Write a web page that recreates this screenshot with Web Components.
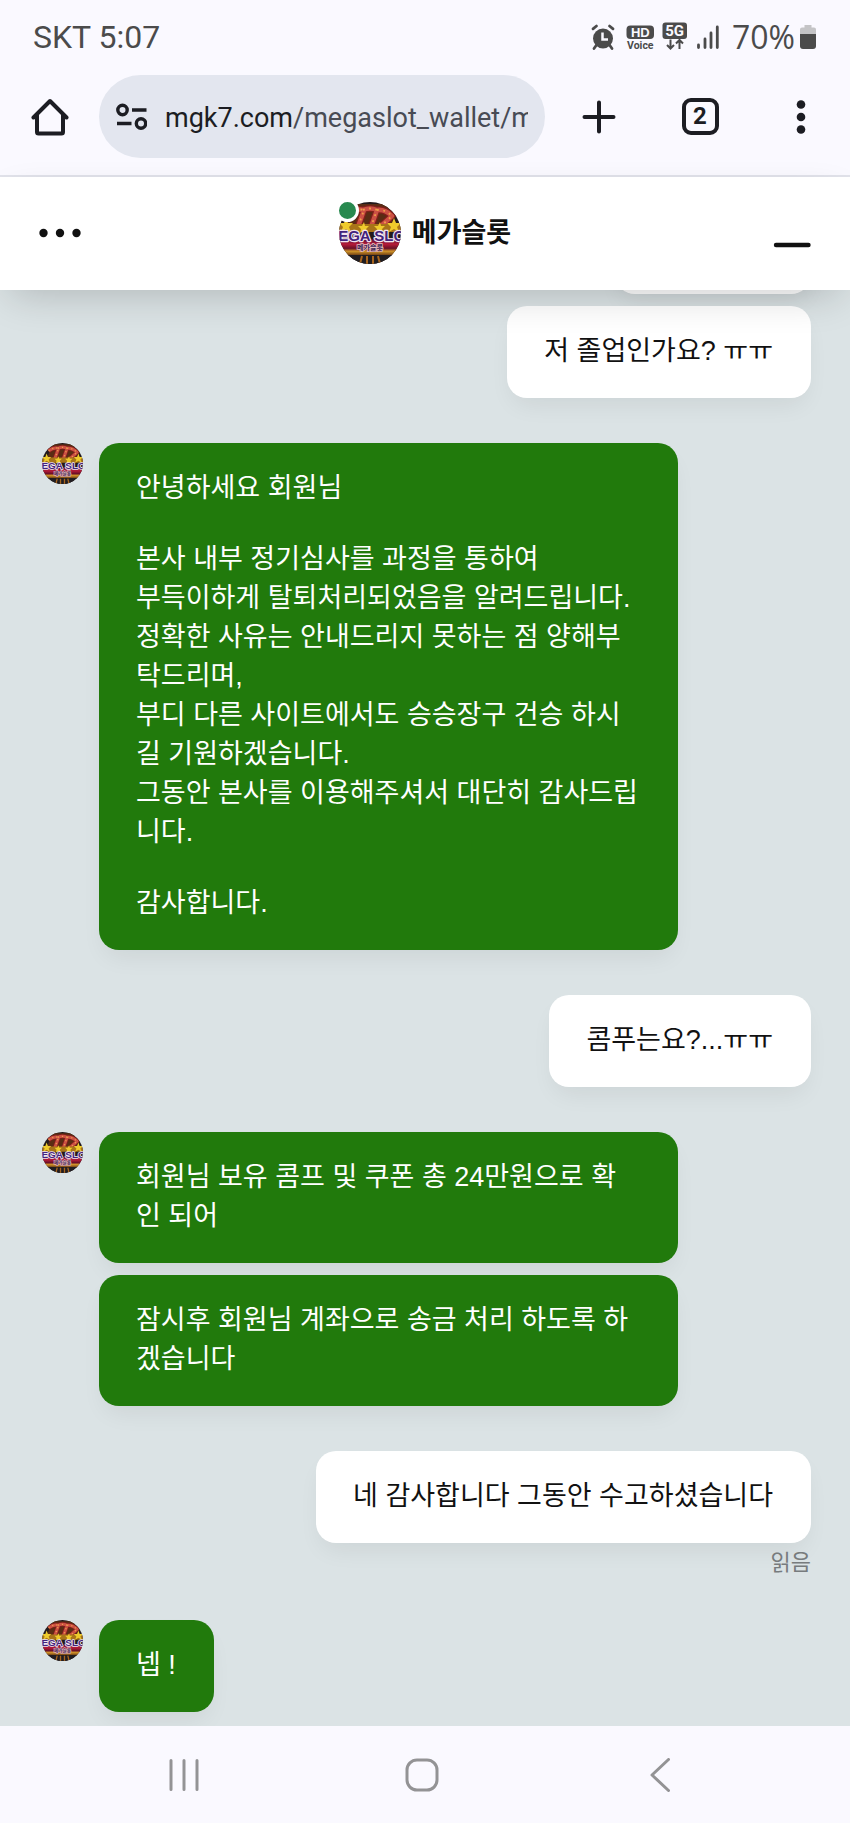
<!DOCTYPE html>
<html lang="ko">
<head>
<meta charset="utf-8">
<meta name="viewport" content="width=device-width, initial-scale=1">
<title>메가슬롯</title>
<style>
  html, body { margin: 0; }
  body { background: #faf9ff; font-family: Roboto, "Noto Sans CJK KR", sans-serif; color: #111; }
</style>
</head>
<body>
<phone-screen>
  <status-bar slot="top" carrier="SKT" time="5:07" battery="70%"></status-bar>
  <browser-toolbar slot="top" host="mgk7.com" path="/megaslot_wallet/mypage" tabs="2"></browser-toolbar>
  <chat-header slot="top">메가슬롯</chat-header>
  <chat-log>
    <chat-group from="me">
      <chat-bubble class="earlier"></chat-bubble>
      <chat-bubble>저 졸업인가요? ㅠㅠ</chat-bubble>
    </chat-group>
    <chat-group from="agent">
      <chat-bubble>
        <p>안녕하세요 회원님</p>
        <p>본사 내부 정기심사를 과정을 통하여<br>부득이하게 탈퇴처리되었음을 알려드립니다.<br>정확한 사유는 안내드리지 못하는 점 양해부탁드리며,<br>부디 다른 사이트에서도 승승장구 건승 하시길 기원하겠습니다.<br>그동안 본사를 이용해주셔서 대단히 감사드립니다.</p>
        <p>감사합니다.</p>
      </chat-bubble>
    </chat-group>
    <chat-group from="me"><chat-bubble>콤푸는요?...ㅠㅠ</chat-bubble></chat-group>
    <chat-group from="agent">
      <chat-bubble>회원님 보유 콤프 및 쿠폰 총 24만원으로 확인 되어</chat-bubble>
      <chat-bubble>잠시후 회원님 계좌으로 송금 처리 하도록 하겠습니다</chat-bubble>
    </chat-group>
    <chat-group from="me" receipt="읽음"><chat-bubble>네 감사합니다 그동안 수고하셨습니다</chat-bubble></chat-group>
    <chat-group from="agent"><chat-bubble>넵 !</chat-bubble></chat-group>
  </chat-log>
  <system-nav slot="bottom"></system-nav>
</phone-screen>

<script>
const define = (name, html, setup) => customElements.define(name, class extends HTMLElement {
  constructor() {
    super();
    this.attachShadow({ mode: 'open' }).innerHTML = html;
  }
  connectedCallback() { if (setup) setup(this, this.shadowRoot); }
});

const buttonReset = `
  button { appearance: none; border: 0; background: none; margin: 0; padding: 0; font: inherit; color: inherit; cursor: pointer;
    display: flex; align-items: center; justify-content: center; }
  svg { display: block; flex: none; }`;

define('phone-screen', `
  <style>
    :host { display: flex; flex-direction: column; min-height: 100vh; }
    main { flex: 1; display: flex; flex-direction: column; background: #dbe3e5; }
    .top { position: relative; z-index: 1; }
  </style>
  <div class="top"><slot name="top"></slot></div>
  <main><slot></slot></main>
  <slot name="bottom"></slot>`);

define('status-bar', `
  <style>
    :host { display: flex; align-items: center; box-sizing: border-box; height: 75px; padding: 0 33px 2px; background: #faf9ff; color: #4b4b4b; font-size: 32px; line-height: 38px; }
    .right { margin-left: auto; display: flex; align-items: center; }
    svg { display: block; }
    .icons { margin-right: 13px; }
    .cell { margin-left: 4px; }
    #level { font-family: "Open Sans", sans-serif; }
  </style>
  <span id="left"></span>
  <div class="right">
    <svg class="icons" width="128" height="30" viewBox="0 0 128 30" fill="#4b4b4b" role="img" aria-label="알람, HD Voice, 5G, 신호">
      <circle cx="12" cy="16.500" r="10"/>
      <path d="M2 6.800 L5.500 4 M22 6.800 L18.500 4 M5.500 23 L3 26.500 M18.500 23 L21 26.500" stroke="#4b4b4b" stroke-width="2.800" fill="none" stroke-linecap="round"/>
      <path d="M11.500 10.500 V17.500 H17" stroke="#faf9ff" stroke-width="2.500" fill="none"/>
      <rect x="35.500" y="3.500" width="27.500" height="13.500" rx="4"/>
      <text x="49.300" y="14.600" text-anchor="middle" font-family="Liberation Sans, sans-serif" font-weight="700" font-size="13" fill="#faf9ff">HD</text>
      <text x="49.300" y="26.500" text-anchor="middle" font-family="Roboto, sans-serif" font-weight="700" font-size="10.500">Voice</text>
      <rect x="71.500" y="0.500" width="24.500" height="16.500" rx="3"/>
      <text x="83.700" y="14" text-anchor="middle" font-family="Roboto, sans-serif" font-weight="700" font-size="15" fill="#faf9ff">5G</text>
      <path d="M79.500 17.500 V26 M76 23 L79.500 26.500 L83 23 M88.500 27 V18.500 M85 21.500 L88.500 18 L92 21.500" stroke="#4b4b4b" stroke-width="2" fill="none"/>
      <path d="M107.500 23 V25.500 M114 17 V25.500 M120 11 V25.500 M126.300 5 V25.500" stroke="#4b4b4b" stroke-width="2.800" stroke-linecap="round"/>
    </svg>
    <span id="level"></span>
    <svg class="cell" width="18" height="26" viewBox="0 0 18 26" aria-hidden="true">
      <path d="M5.500 1 H12.500 V3.500 H15 Q17 3.500 17 5.500 V10 H1 V5.500 Q1 3.500 3 3.500 H5.500 Z" fill="#c4c4c6"/>
      <path d="M1 10 H17 V22 Q17 25 14 25 H4 Q1 25 1 22 Z" fill="#4b4b4b"/>
    </svg>
  </div>`, (host, root) => {
  root.getElementById('left').textContent = host.getAttribute('carrier') + ' ' + host.getAttribute('time');
  root.getElementById('level').textContent = host.getAttribute('battery');
});

define('browser-toolbar', `
  <style>
    ${buttonReset}
    :host { display: flex; align-items: center; padding: 0 25px 17px 26px; background: #faf9ff; border-bottom: 2px solid #e1e2ea; color: #1c1d23; }
    .icon { width: 48px; height: 48px; flex: none; }
    .address { flex: 1; min-width: 0; height: 83px; margin: 0 30px 0 25px; padding: 0 17px; border-radius: 42px; background: #e3e6ef; gap: 18px; justify-content: flex-start; }
    .url { flex: 1; min-width: 0; overflow: hidden; white-space: nowrap; text-align: left; font-size: 27px; line-height: 36px; padding-top: 2px; }
    #path { color: #484b54; }
    .actions { display: flex; gap: 53px; }
    #count { width: 29px; height: 29px; border: 4px solid; border-radius: 9px; font-size: 24px; line-height: 29px; font-weight: 700; text-align: center; }
  </style>
  <button class="icon" aria-label="홈">
    <svg width="38" height="38" viewBox="0 0 38 38" fill="none" stroke="#1c1d23" stroke-width="4" stroke-linecap="round" stroke-linejoin="round">
      <path d="M2.500 19.500 L19 3 L35.500 19.500 M6 17 V34 Q6 35.500 7.500 35.500 H30.500 Q32 35.500 32 34 V17"/>
    </svg>
  </button>
  <button class="address" aria-label="주소창">
    <svg width="31" height="27" viewBox="0 0 31 27" fill="none" stroke="#1c1d23" stroke-width="3.400">
      <circle cx="6.500" cy="7" r="4.700"/><circle cx="25" cy="20.500" r="4.700"/>
      <path d="M16 7 H30.500 M1 20.500 H15.500"/>
    </svg>
    <span class="url"><span id="domain"></span><span id="path"></span></span>
  </button>
  <div class="actions">
    <button class="icon" aria-label="새 탭">
      <svg width="34" height="34" viewBox="0 0 34 34" stroke="#1c1d23" stroke-width="4" stroke-linecap="round"><path d="M17 2.500 V31.500 M2.500 17 H31.500"/></svg>
    </button>
    <button class="icon" aria-label="탭 목록"><span id="count"></span></button>
    <button class="icon" aria-label="메뉴">
      <svg width="10" height="34" viewBox="0 0 10 34" fill="#1c1d23"><circle cx="5" cy="4.500" r="4.300"/><circle cx="5" cy="17" r="4.300"/><circle cx="5" cy="29.500" r="4.300"/></svg>
    </button>
  </div>`, (host, root) => {
  root.getElementById('domain').textContent = host.getAttribute('host');
  root.getElementById('path').textContent = host.getAttribute('path');
  root.getElementById('count').textContent = host.getAttribute('tabs');
});

define('brand-avatar', `
  <style>
    :host { display: block; flex: none; width: 41px; height: 41px; }
    svg { display: block; width: 100%; height: 100%; }
  </style>
  <svg viewBox="0 0 62 62" aria-hidden="true">
    <defs>
      <clipPath id="round"><circle cx="31" cy="31" r="31"/></clipPath>
      <linearGradient id="band" x1="0" y1="0" x2="0" y2="1">
        <stop offset="0" stop-color="#4a1238"/><stop offset=".3" stop-color="#b81a38"/><stop offset=".55" stop-color="#6a1028"/><stop offset=".72" stop-color="#d09428"/><stop offset="1" stop-color="#5a2c10"/>
      </linearGradient>
    </defs>
    <g clip-path="url(#round)">
      <rect width="62" height="62" fill="#231a1c"/>
      <path d="M16 2 H48 L56 26 H6 Z" fill="#5a2c14"/>
      <g fill="none" stroke-linejoin="round">
        <path d="M10 12 Q17 6 25 8 L19 25 M24 8 Q31 5 38 8 L32 25 M38 8 Q46 7 53 14 L42 24" stroke="#7e1f1a" stroke-width="7"/>
        <path d="M10 12 Q17 6 25 8 L19 25 M24 8 Q31 5 38 8 L32 25 M38 8 Q46 7 53 14 L42 24" stroke="#cc5044" stroke-width="4.500"/>
        <path d="M10 12 Q17 6 25 8 L19 25 M24 8 Q31 5 38 8 L32 25 M38 8 Q46 7 53 14 L42 24" stroke="#f0a04a" stroke-width="1.800" stroke-dasharray="1.800 4.500"/>
      </g>
      <path d="M0 22 H62 V30 H0 Z" fill="#a87418"/>
      <path d="M7 16 l2 5 5 0 -4 4 2 5 -5-3 -5 3 2-5 -4-4 5 0z M25 20 l1 4 4 0 -3 3 1 4 -3-2 -4 2 1-4 -3-3 4 0z M41 20 l1 4 4 0 -3 3 1 4 -3-2 -4 2 1-4 -3-3 4 0z M55 16 l2 5 5 0 -4 4 2 5 -5-3 -5 3 2-5 -4-4 5 0z" fill="#efcb2c"/>
      <rect y="37" width="62" height="17" fill="url(#band)"/>
      <rect y="53" width="62" height="9" fill="#211d20"/>
      <path d="M23 54 L21 62 M28 54 V62 M34 54 V62 M39 54 L41 62" stroke="#a8641c" stroke-width="2"/>
      <text x="31" y="39" text-anchor="middle" font-family="Liberation Sans, sans-serif" font-weight="700" font-size="15" fill="#43237c" stroke="#f3e4f0" stroke-width="2.400" stroke-linejoin="round" paint-order="stroke">MEGA SLOT</text>
      <text x="31" y="48" text-anchor="middle" font-family="Noto Sans CJK KR, sans-serif" font-weight="700" font-size="7" fill="#3c1c50" stroke="#e8bcc0" stroke-width="1.500" paint-order="stroke">메가슬롯</text>
    </g>
  </svg>`);

define('chat-header', `
  <style>
    ${buttonReset}
    :host { display: grid; grid-template-columns: 1fr auto 1fr; align-items: center; box-sizing: border-box; height: 113px; padding: 0 39px 2px; background: #fff;
      box-shadow: 0 14px 40px -10px rgba(0, 0, 0, .2); color: #111; }
    .more { justify-self: start; }
    .who { display: flex; align-items: center; gap: 11px; }
    .face { position: relative; }
    brand-avatar { width: 62px; height: 62px; }
    .online { position: absolute; left: -3px; top: -3px; width: 17px; height: 17px; border: 3px solid #fff; border-radius: 50%; background: #28894f; }
    h1 { margin: 0; font-size: 27px; line-height: 40px; font-weight: 700; }
    .min { justify-self: end; height: 48px; align-items: flex-end; }
  </style>
  <button class="more" aria-label="더보기">
    <svg width="42" height="10" viewBox="0 0 42 10" fill="#111"><circle cx="4.500" cy="5" r="4.200"/><circle cx="21" cy="5" r="4.200"/><circle cx="37.500" cy="5" r="4.200"/></svg>
  </button>
  <div class="who">
    <div class="face"><brand-avatar></brand-avatar><span class="online"></span></div>
    <h1><slot></slot></h1>
  </div>
  <button class="min" aria-label="최소화">
    <svg width="38" height="24" viewBox="0 0 38 24"><path d="M3 12 H35.500" stroke="#111" stroke-width="4.400" stroke-linecap="round"/></svg>
  </button>`);

define('chat-log', `
  <style>
    :host { display: flex; flex-direction: column; gap: 45px; padding: 0 39px 14px 42px; font-family: "Liberation Sans", "Noto Sans CJK KR", sans-serif; }
  </style>
  <slot></slot>`);

define('chat-group', `
  <style>
    :host { display: flex; gap: 16px; --bubble: #217a0c; --ink: #fff; }
    :host([from="me"]) { justify-content: flex-end; --bubble: #fff; --ink: #111; }
    :host([from="me"]) brand-avatar { display: none; }
    .stack { display: flex; flex-direction: column; align-items: flex-start; gap: 12px; min-width: 0; max-width: 579px; }
    :host([from="me"]) .stack { align-items: flex-end; }
    small { margin: -8px 0 -4px; font-size: 22px; line-height: 32px; color: #777b7d; }
    small[hidden] { display: none; }
  </style>
  <brand-avatar></brand-avatar>
  <div class="stack"><slot></slot><small hidden></small></div>`, (host, root) => {
  const text = host.getAttribute('receipt');
  const small = root.querySelector('small');
  if (text) { small.textContent = text; small.hidden = false; }
});

define('chat-bubble', `
  <style>
    :host { display: block; box-sizing: border-box; max-width: 100%; padding: 26px 38px 27px 37px; border-radius: 20px; background: var(--bubble); color: var(--ink);
      font-size: 27px; line-height: 39px; box-shadow: 0 12px 24px -6px rgba(0, 0, 0, .07); }
    :host(.earlier) { width: 196px; height: 92px; margin-top: -88px; }
    ::slotted(p) { margin: 0 0 32px !important; }
    ::slotted(p:last-child) { margin: 0 !important; }
  </style>
  <slot></slot>`);

define('system-nav', `
  <style>
    ${buttonReset}
    :host { display: grid; grid-template-columns: repeat(3, 1fr); height: 97px; padding: 0 71px 0 65px; background: #faf9ff; }
    svg { fill: none; stroke: #939395; stroke-width: 3; stroke-linecap: round; stroke-linejoin: round; }
  </style>
  <button aria-label="최근 앱"><svg width="32" height="34" viewBox="0 0 32 34"><path d="M3 2.500 V31.500 M16 2.500 V31.500 M29 2.500 V31.500"/></svg></button>
  <button aria-label="홈"><svg width="34" height="34" viewBox="0 0 34 34"><rect x="2" y="2" width="30" height="30" rx="10"/></svg></button>
  <button aria-label="뒤로"><svg width="20" height="34" viewBox="0 0 20 34"><path d="M18.500 1.500 L2 17 L18.500 32.500"/></svg></button>`);
</script>
</body>
</html>
